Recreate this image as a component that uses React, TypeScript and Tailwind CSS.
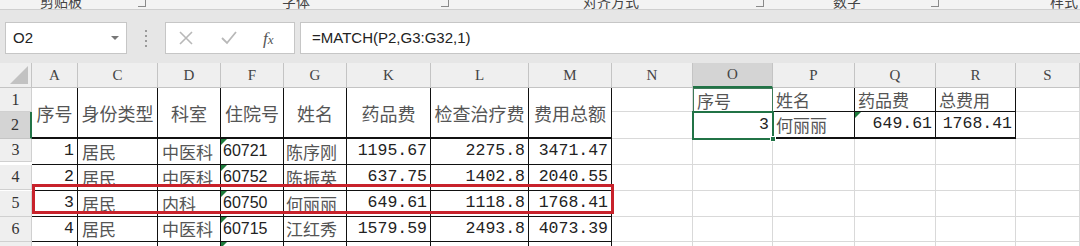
import React from 'react';

const cjk = "font-['Noto_Sans_CJK_SC',sans-serif]";
const mono = "font-['Liberation_Mono',monospace]";
const sans = "font-['Liberation_Sans',sans-serif]";
const serif = "font-['Liberation_Serif',serif]";

const letters = ['A', 'C', 'D', 'F', 'G', 'K', 'L', 'M', 'N', 'O', 'P', 'Q', 'R', 'S'];

const rows = [
  { n: '3', a: '1', c: '居民', d: '中医科', f: '60721', g: '陈序刚', k: '1195.67', l: '2275.8', m: '3471.47', h: 'h-[23px]' },
  { n: '4', a: '2', c: '居民', d: '中医科', f: '60752', g: '陈振英', k: '637.75', l: '1402.8', m: '2040.55', h: 'h-[25px]' },
  { n: '5', a: '3', c: '居民', d: '内科', f: '60750', g: '何丽丽', k: '649.61', l: '1118.8', m: '1768.41', h: 'h-[26px]' },
  { n: '6', a: '4', c: '居民', d: '中医科', f: '60715', g: '江红秀', k: '1579.59', l: '2493.8', m: '4073.39', h: 'h-[25px]' },
  { n: '7', a: '', c: '居民', d: '外科', f: '', g: '袁小华', k: '', l: '', m: '', h: 'h-[25px]' }
];

const grey = 'border-r border-b border-[#d9d9d9]';
const black = 'border-r border-b border-[#111]';

function Tri() {
  return (
    <span className="absolute left-0 top-0 w-0 h-0 border-t-[6px] border-r-[6px] border-t-[#1e7b3c] border-r-transparent" />
  );
}

function Ribbon() {
  const groups = [
    { label: '剪贴板', w: 'w-[152px]', pl: 'pl-[40px]' },
    { label: '字体', w: 'w-[303px]', pl: 'pl-[130px]' },
    { label: '对齐方式', w: 'w-[315px]', pl: 'pl-[128px]' },
    { label: '数字', w: 'w-[175px]', pl: 'pl-[63px]' },
    { label: '样式', w: 'flex-1', pl: 'pl-[105px]' }
  ];
  return (
    <div className="h-[10px] flex bg-[#f3f3f3] border-b border-[#cfcfcf] overflow-hidden">
      {groups.map((g, i) => (
        <div key={i} className={`${g.w} ${g.pl} relative flex items-start`}>
          <span className={`${cjk} text-[14px] leading-[14px] -mt-[6px] text-[#444]`}>{g.label}</span>
          {i < 4 && (
            <span className="absolute right-[6px] top-0 w-[8px] h-[7px] border-r border-b border-[#8a8a8a]" />
          )}
        </div>
      ))}
    </div>
  );
}

function FormulaBar() {
  return (
    <div className="bg-[#e6e6e6] pt-[12px] pb-[9px]">
      <div className="h-[32px] flex">
        <div className="ml-[5px] w-[122px] bg-white border border-[#c6c6c6] flex items-center justify-between pl-[7px] pr-[7px]">
          <span className={`${sans} text-[15px] text-[#222]`}>O2</span>
          <span className="w-0 h-0 border-l-[4px] border-r-[4px] border-t-[4px] border-l-transparent border-r-transparent border-t-[#777]" />
        </div>
        <div className="w-[38px] flex flex-col items-center justify-center gap-[3px]">
          <span className="w-[2px] h-[2px] bg-[#9a9a9a]" />
          <span className="w-[2px] h-[2px] bg-[#9a9a9a]" />
          <span className="w-[2px] h-[2px] bg-[#9a9a9a]" />
          <span className="w-[2px] h-[2px] bg-[#9a9a9a]" />
        </div>
        <div className="w-[130px] bg-white border border-[#c6c6c6] flex items-center">
          <svg width="14" height="14" viewBox="0 0 14 14" className="ml-[13px]">
            <path d="M1 1 L13 13 M13 1 L1 13" stroke="#b8b8b8" strokeWidth="1.6" />
          </svg>
          <svg width="16" height="14" viewBox="0 0 16 14" className="ml-[28px]">
            <path d="M1 7 L6 12 L15 1" stroke="#b8b8b8" strokeWidth="1.8" fill="none" />
          </svg>
          <span className={`${serif} italic text-[#555] text-[17px] ml-[26px] leading-none`}>
            f<span className="text-[13px]">x</span>
          </span>
        </div>
        <div className="flex-1 ml-[5px] bg-white border border-r-0 border-[#c6c6c6] flex items-center pl-[11px]">
          <span className={`${sans} text-[15px] text-[#222]`}>=MATCH(P2,G3:G32,1)</span>
        </div>
      </div>
    </div>
  );
}

export default function App() {
  return (
    <div className="w-[1080px] h-[246px] overflow-hidden bg-white">
      <Ribbon />
      <FormulaBar />
      <div className="relative grid grid-cols-[32px_46px_80px_63px_63px_63px_84px_98px_83px_81px_80px_82px_81px_80px_1fr]">
        {/* column headers */}
        <div className="h-[25px] bg-[#efefef] border-r border-b border-[#c4c4c4] relative">
          <span className="absolute right-[3px] bottom-[3px] w-0 h-0 border-l-[18px] border-t-[18px] border-l-transparent border-t-transparent border-b-0 border-r-[0px]" />
          <svg width="18" height="18" viewBox="0 0 18 18" className="absolute right-[3px] bottom-[3px]">
            <path d="M18 0 L18 18 L0 18 Z" fill="#c2c2c2" />
          </svg>
        </div>
        {letters.map((l) => (
          <div
            key={l}
            className={`h-[25px] flex items-center justify-center ${serif} text-[15px] text-[#444] border-r ${
              l === 'O'
                ? 'bg-[#d4d4d4] border-b-2 border-r-[#c4c4c4] border-b-[#217346]'
                : 'bg-[#efefef] border-b border-[#c4c4c4]'
            }`}
          >
            {l}
          </div>
        ))}

        {/* row 1 */}
        <div className="h-[24px] bg-[#efefef] border-r border-b border-[#d0d0d0] flex items-center justify-center">
          <span className={`${serif} text-[16px] text-[#333]`}>1</span>
        </div>
        {['序号', '身份类型', '科室', '住院号', '姓名', '药品费', '检查治疗费', '费用总额'].map((t) => (
          <div key={t} className={`row-span-2 ${black} border-b-2 flex items-center justify-center`}>
            <span className={`${cjk} text-[18px] leading-none text-[#555]`}>{t}</span>
          </div>
        ))}
        <div className={grey} />
        <div className="border border-[#3d7a58] flex items-center pl-[3px]">
          <span className={`${cjk} text-[17px] leading-none text-[#555]`}>序号</span>
        </div>
        {['姓名', '药品费', '总费用'].map((t) => (
          <div key={t} className={`${black} flex items-center pl-[3px]`}>
            <span className={`${cjk} text-[17px] leading-none text-[#555]`}>{t}</span>
          </div>
        ))}
        <div className={grey} />

        {/* row 2 */}
        <div className="h-[27px] bg-[#d4d4d4] border-r-2 border-b border-r-[#217346] border-b-[#c4c4c4] flex items-center justify-center">
          <span className={`${serif} text-[16px] text-[#333]`}>2</span>
        </div>
        <div className={grey} />
        <div className="flex items-center justify-end pr-[4px]">
          <span className={`${mono} text-[16.5px] text-[#222]`}>3</span>
        </div>
        <div className={`${black} border-b-2 flex items-center pl-[3px]`}>
          <span className={`${cjk} text-[17px] leading-none text-[#555]`}>何丽丽</span>
        </div>
        <div className={`${black} border-b-2 relative flex items-center justify-end pr-[3px]`}>
          <Tri />
          <span className={`${mono} text-[16.5px] text-[#222]`}>649.61</span>
        </div>
        <div className={`${black} border-b-2 flex items-center justify-end pr-[3px]`}>
          <span className={`${mono} text-[16.5px] text-[#222]`}>1768.41</span>
        </div>
        <div className={grey} />

        {/* data rows */}
        {rows.map((r) => (
          <React.Fragment key={r.n}>
            <div className={`${r.h} bg-[#efefef] border-r border-b border-[#d0d0d0] flex items-center justify-center`}>
              <span className={`${serif} text-[16px] text-[#333]`}>{r.n}</span>
            </div>
            <div className={`${black} flex items-center justify-end pr-[3px]`}>
              <span className={`${mono} text-[16.5px] text-[#222]`}>{r.a}</span>
            </div>
            <div className={`${black} flex items-center pl-[4px]`}>
              <span className={`${cjk} text-[17px] leading-none text-[#555]`}>{r.c}</span>
            </div>
            <div className={`${black} flex items-center pl-[4px]`}>
              <span className={`${cjk} text-[17px] leading-none text-[#555]`}>{r.d}</span>
            </div>
            <div className={`${black} relative flex items-center pl-[2px]`}>
              <Tri />
              <span className={`${sans} text-[16px] text-[#222]`}>{r.f}</span>
            </div>
            <div className={`${black} flex items-center pl-[2px]`}>
              <span className={`${cjk} text-[17px] leading-none text-[#555]`}>{r.g}</span>
            </div>
            {[r.k, r.l, r.m].map((v, i) => (
              <div key={i} className={`${black} flex items-center justify-end pr-[3px]`}>
                <span className={`${mono} text-[16.5px] text-[#222]`}>{v}</span>
              </div>
            ))}
            {[0, 1, 2, 3, 4, 5].map((i) => (
              <div key={'e' + i} className={grey} />
            ))}
          </React.Fragment>
        ))}

        {/* red highlight around row 5 */}
        <div className="absolute left-[32px] top-[121px] w-[582px] h-[30px] border-[3px] border-[#c8222b] pointer-events-none" />
        {/* active cell O2 */}
        <div className="absolute left-[692px] top-[48px] w-[82px] h-[29px] border-2 border-[#217346] pointer-events-none" />
        <div className="absolute left-[770px] top-[73px] w-[6px] h-[6px] bg-[#217346] border border-white" />
      </div>
    </div>
  );
}
